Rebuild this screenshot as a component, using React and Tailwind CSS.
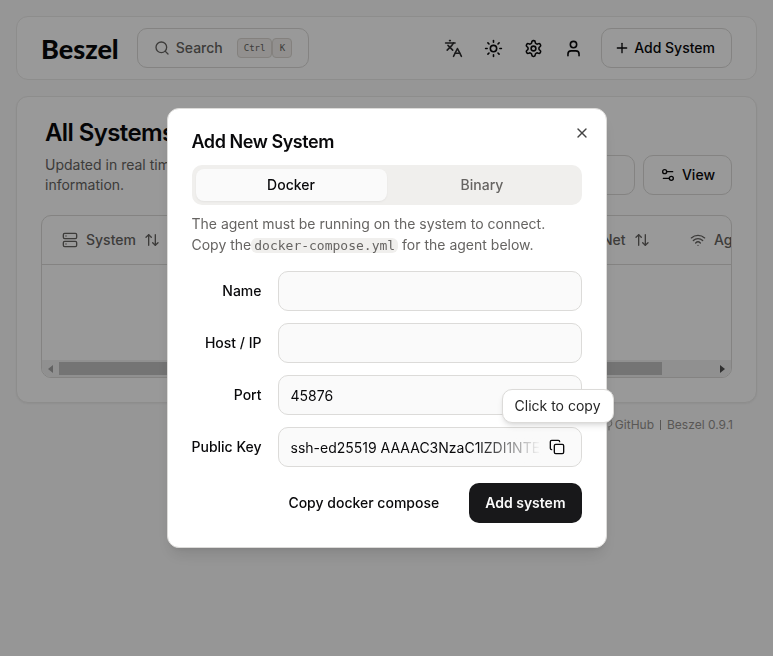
import {
  ArrowUpDown, Copy, Cpu, EthernetPort, HardDrive, Languages, MemoryStick, Plus,
  Search, Server, Settings2, Sun, User, Wifi, X,
} from "lucide-react";
import { FiGithub } from "react-icons/fi";

const outline = "rounded-[10px] border border-[#dcdbd9] text-sm font-medium";

const columns = [
  { name: "System", icon: Server, width: "w-40" },
  { name: "CPU", icon: Cpu, width: "w-30" },
  { name: "Memory", icon: MemoryStick, width: "w-36" },
  { name: "Disk", icon: HardDrive, width: "w-[92px]" },
  { name: "Net", icon: EthernetPort, width: "w-28" },
  { name: "Agent", icon: Wifi, width: "w-80" },
];

function GearIcon() {
  return (
    <svg
      width="19" height="19" viewBox="0 0 24 24" fill="none"
      stroke="currentColor" strokeWidth="2" strokeLinecap="round" strokeLinejoin="round"
    >
      <path d="M12.22 2h-.44a2 2 0 0 0-2 2v.18a2 2 0 0 1-1 1.73l-.43.25a2 2 0 0 1-2 0l-.15-.08a2 2 0 0 0-2.73.73l-.22.38a2 2 0 0 0 .73 2.73l.15.1a2 2 0 0 1 1 1.72v.51a2 2 0 0 1-1 1.74l-.15.09a2 2 0 0 0-.73 2.73l.22.38a2 2 0 0 0 2.73.73l.15-.08a2 2 0 0 1 2 0l.43.25a2 2 0 0 1 1 1.73V20a2 2 0 0 0 2 2h.44a2 2 0 0 0 2-2v-.18a2 2 0 0 1 1-1.73l.43-.25a2 2 0 0 1 2 0l.15.08a2 2 0 0 0 2.73-.73l.22-.39a2 2 0 0 0-.73-2.73l-.15-.08a2 2 0 0 1-1-1.74v-.5a2 2 0 0 1 1-1.74l.15-.09a2 2 0 0 0 .73-2.73l-.22-.38a2 2 0 0 0-2.73-.73l-.15.08a2 2 0 0 1-2 0l-.43-.25a2 2 0 0 1-1-1.73V4a2 2 0 0 0-2-2z" />
      <circle cx="12" cy="12" r="3" />
    </svg>
  );
}

function IconButton({ label, children }) {
  return (
    <button aria-label={label} className="flex size-10 items-center justify-center">
      {children}
    </button>
  );
}

function Kbd({ children }) {
  return (
    <kbd className="flex h-5 min-w-5 items-center justify-center rounded border border-[#dcd8d2] bg-[#f3f1ee] px-1.5 font-['DejaVu_Sans_Mono',monospace] text-[9px] text-[#666462]">
      {children}
    </kbd>
  );
}

function Navbar() {
  return (
    <header className="flex h-16 items-center rounded-xl border border-[#ecebea] bg-white px-6">
      <a href="#" className="font-['Lato',sans-serif] text-[27px] leading-none font-black">Beszel</a>
      <button className={`${outline} ml-4.5 flex h-10 items-center px-4 text-[#666462]`}>
        <Search size={16} className="mr-1.5" />
        Search
        <span className="ml-3.5 flex">
          <Kbd>Ctrl</Kbd>
          <Kbd>K</Kbd>
        </span>
      </button>
      <nav className="ml-auto flex items-center">
        <IconButton label="Language"><Languages size={19} className="opacity-85" /></IconButton>
        <IconButton label="Theme"><Sun size={19} /></IconButton>
        <IconButton label="Settings"><GearIcon /></IconButton>
        <IconButton label="Account"><User size={19} /></IconButton>
        <button className={`${outline} ml-2 flex h-10 items-center gap-1 pr-4 pl-3`}>
          <Plus size={16} />
          Add System
        </button>
      </nav>
    </header>
  );
}

function SystemsTable() {
  return (
    <div className="overflow-hidden rounded-[10px] border border-[#dcdbd9]">
      <div className="overflow-hidden">
        <table className="w-[948px] table-fixed text-left text-sm">
          <thead>
            <tr className="h-12 border-b border-[#dcdbd9] text-[#666462]">
              {columns.map(({ name, icon: Icon, width }) => (
                <th key={name} className={`${width} px-2 font-medium`}>
                  <button className="flex items-center gap-2 px-3">
                    <Icon size={16} className="shrink-0" />
                    {name}
                    <ArrowUpDown size={16} className="shrink-0" />
                  </button>
                </th>
              ))}
            </tr>
          </thead>
          <tbody>
            <tr className="h-24">
              <td colSpan={6} className="text-center">No systems found.</td>
            </tr>
          </tbody>
        </table>
      </div>
      <div className="flex h-[17px] items-center bg-[#f1f1f1] px-1.5">
        <svg width="5" height="8" viewBox="0 0 5 8" className="shrink-0 text-[#a3a3a3]">
          <path d="M5 0v8L0 4z" fill="currentColor" />
        </svg>
        <div className="mx-1.5 flex flex-1">
          <div className="h-[13px] w-[92%] bg-[#c1c1c1]" />
        </div>
        <svg width="5" height="8" viewBox="0 0 5 8" className="shrink-0 text-[#505050]">
          <path d="M0 0v8l5-4z" fill="currentColor" />
        </svg>
      </div>
    </div>
  );
}

function SystemsCard() {
  return (
    <main className="mt-4 rounded-xl border border-[#ecebea] bg-white p-6 shadow-xs">
      <div className="mb-5 flex items-end gap-2">
        <div className="flex-1 pl-1">
          <h1 className="text-2xl leading-6 font-semibold tracking-tight">All Systems</h1>
          <p className="mt-2.5 text-sm text-[#666462]">
            Updated in real time. Click on a system to view information.
          </p>
        </div>
        <input aria-label="Filter" placeholder="Filter..." className={`${outline} h-10 w-56 px-4`} />
        <button className={`${outline} flex h-10 items-center gap-1.5 px-4`}>
          <Settings2 size={16} />
          View
        </button>
      </div>
      <SystemsTable />
    </main>
  );
}

function Field({ id, label, children, ...props }) {
  return (
    <>
      <label htmlFor={id} className="text-right text-sm font-medium">{label}</label>
      <div className="relative">
        <input
          id={id}
          className="block h-10 w-full rounded-[10px] border border-[#dcdbd9] bg-[#fafafa] px-3 text-sm"
          {...props}
        />
        {children}
      </div>
    </>
  );
}

function AddSystemDialog() {
  return (
    <div className="fixed inset-0 flex items-center justify-center bg-black/40">
      <section
        role="dialog"
        aria-labelledby="dialog-title"
        className="relative w-full max-w-[440px] rounded-xl border border-[#dcdbd9] bg-white p-6 shadow-lg"
      >
        <h2 id="dialog-title" className="text-lg leading-[18px] font-semibold tracking-tight">Add New System</h2>
        <button aria-label="Close" className="absolute top-4 right-4 text-[#444444]"><X size={16} /></button>

        <div role="tablist" className="mt-3.5 grid h-10 grid-cols-2 rounded-[10px] bg-[#f0efed] p-1 text-sm font-medium">
          <button role="tab" aria-selected="true" className="rounded-lg bg-[#fafafa] shadow-xs">Docker</button>
          <button role="tab" aria-selected="false" className="text-[#666462]">Binary</button>
        </div>

        <p className="mt-2 text-sm leading-[21px] text-[#666462]">
          The agent must be running on the system to connect.
          <br />
          Copy the
          <code className="rounded-md bg-[#f0efed] px-[3px] font-['DejaVu_Sans_Mono',monospace] text-[13px] leading-3">docker-compose.yml</code>{" "}
          for the agent below.
        </p>

        <form className="mt-4" onSubmit={(e) => e.preventDefault()}>
          <div className="grid grid-cols-[auto_1fr] items-center gap-x-4 gap-y-3">
            <Field id="name" label="Name" />
            <Field id="host" label="Host / IP" />
            <Field id="port" label="Port" defaultValue="45876" />
            <Field id="pkey" label="Public Key" readOnly value="ssh-ed25519 AAAAC3NzaC1lZDI1NTE5AAAAIJ">
              <div className="absolute inset-y-px right-px flex rounded-r-[10px]">
                <div className="w-16 bg-linear-to-r from-transparent to-[#fafafa]" />
                <button
                  type="button"
                  aria-label="Copy public key"
                  className="flex w-10 items-center rounded-r-[10px] bg-[#fafafa] pl-2"
                >
                  <Copy size={16} />
                </button>
              </div>
              <div
                role="tooltip"
                className="absolute -right-8 bottom-11 rounded-[10px] border border-[#dcdbd9] bg-white px-3 py-1.5 text-sm whitespace-nowrap text-[#262626] shadow-md"
              >
                Click to copy
              </div>
            </Field>
          </div>
          <div className="mt-4 flex justify-end gap-3.5 text-sm">
            <button type="button" className="h-10 px-4 font-medium">Copy docker compose</button>
            <button className="h-10 rounded-[10px] bg-[#18181a] px-4 font-semibold text-[#fafafa]">Add system</button>
          </div>
        </form>
      </section>
    </div>
  );
}

export default function App() {
  return (
    <div className="min-h-screen bg-[#fafafa] p-4 font-['Inter',sans-serif] text-[#09090b]">
      <Navbar />
      <SystemsCard />
      <footer className="mt-3.5 flex items-center justify-end gap-1.5 pr-6 text-xs text-[#94918e]">
        <a href="#" className="flex items-center gap-0.5"><FiGithub size={12} />GitHub</a>
        <span className="h-2.5 w-px bg-[#94918e]" />
        <a href="#">Beszel 0.9.1</a>
      </footer>
      <AddSystemDialog />
    </div>
  );
}
